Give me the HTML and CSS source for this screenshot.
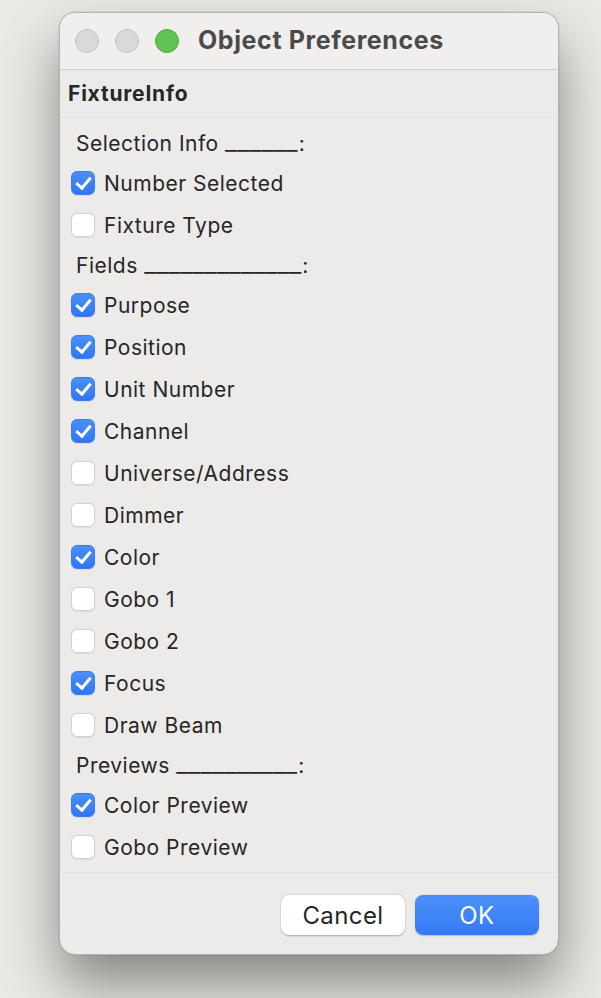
FILE: index.html
```html
<!DOCTYPE html>
<html>
<head>
<meta charset="utf-8">
<link rel="stylesheet" href="styles.css">
</head>
<body>
<div class="window">
  <div class="titlebar">
    <div class="lights">
      <span class="light gray"></span>
      <span class="light gray"></span>
      <span class="light green"></span>
    </div>
    <div class="title">Object Preferences</div>
  </div>
  <div class="header">FixtureInfo</div>
  <div class="panel">
    <div class="label">Selection Info <span class="blank">______</span>:</div>
    <div class="row"><span class="cb on"></span><span>Number Selected</span></div>
    <div class="row"><span class="cb"></span><span>Fixture Type</span></div>
    <div class="label">Fields <span class="blank">_____________</span>:</div>
    <div class="row"><span class="cb on"></span><span>Purpose</span></div>
    <div class="row"><span class="cb on"></span><span>Position</span></div>
    <div class="row"><span class="cb on"></span><span>Unit Number</span></div>
    <div class="row"><span class="cb on"></span><span>Channel</span></div>
    <div class="row"><span class="cb"></span><span>Universe/Address</span></div>
    <div class="row"><span class="cb"></span><span>Dimmer</span></div>
    <div class="row"><span class="cb on"></span><span>Color</span></div>
    <div class="row"><span class="cb"></span><span>Gobo 1</span></div>
    <div class="row"><span class="cb"></span><span>Gobo 2</span></div>
    <div class="row"><span class="cb on"></span><span>Focus</span></div>
    <div class="row"><span class="cb"></span><span>Draw Beam</span></div>
    <div class="label">Previews <span class="blank">__________</span>:</div>
    <div class="row"><span class="cb on"></span><span>Color Preview</span></div>
    <div class="row"><span class="cb"></span><span>Gobo Preview</span></div>
  </div>
  <div class="footer">
    <button class="btn cancel">Cancel</button>
    <button class="btn ok">OK</button>
  </div>
</div>
</body>
</html>
```
FILE: styles.css
```css
html, body {
  margin: 0;
  padding: 0;
}
body {
  width: 601px;
  height: 998px;
  overflow: hidden;
  background: #e9eae5;
  font-family: Inter, "Open Sans", sans-serif;
  padding-top: 12px;
  box-sizing: border-box;
}
.window {
  margin-left: 59px;
  width: 500px;
  height: 943px;
  box-sizing: border-box;
  border: 1px solid #b4b4b2;
  border-radius: 16px;
  background: #ecebea;
  box-shadow: 0 30px 55px rgba(0,0,0,0.42), 0 0 0 0.5px rgba(0,0,0,0.1);
  overflow: hidden;
  display: flex;
  flex-direction: column;
}
.titlebar {
  height: 57px;
  flex: none;
  background: #f0efee;
  border-bottom: 1px solid #cfcfcf;
  box-sizing: border-box;
  display: flex;
  align-items: center;
  padding-left: 15px;
}
.lights {
  display: flex;
  gap: 16px;
}
.light {
  width: 24px;
  height: 24px;
  border-radius: 50%;
  box-sizing: border-box;
}
.light.gray {
  background: #d9d9d8;
  border: 1px solid #c4c4c3;
}
.light.green {
  background: #5fc454;
  border: 1px solid #4daa42;
}
.title {
  margin-left: 19px;
  margin-top: -2px;
  font-size: 25px;
  font-weight: 700;
  color: #4a4a4a;
  letter-spacing: 0.6px;
}
.header {
  height: 48px;
  flex: none;
  background: #ebebeb;
  border-bottom: 1px solid #e2e2e2;
  box-sizing: border-box;
  display: flex;
  align-items: center;
  padding-left: 8px;
  font-size: 21px;
  font-weight: 700;
  color: #262626;
  letter-spacing: 0.8px;
}
.panel {
  margin: 0 1px 0 1px;
  border-left: 1px solid #e2e2e2;
  border-right: 1px solid #e2e2e2;
  border-bottom: 1px solid #e1e1e1;
  padding: 6px 0 4px 9px;
  flex: none;
  color: #262626;
  font-size: 21px;
  letter-spacing: 0.5px;
}
.label {
  height: 38px;
  display: flex;
  align-items: center;
  padding-left: 5px;
  white-space: pre;
}
.blank {
  font-size: 27px;
  font-weight: 300;
  letter-spacing: 0;
  margin-left: 0;
  margin-right: 1px;
  line-height: 1;
  position: relative;
  top: -3px;
}
.row {
  height: 42px;
  display: flex;
  align-items: center;
  gap: 9px;
}
.cb {
  width: 24px;
  height: 24px;
  box-sizing: border-box;
  border-radius: 6px;
  background: #ffffff;
  border: 1px solid #d2d2d2;
  box-shadow: 0 0.5px 1px rgba(0,0,0,0.08);
  position: relative;
  flex: none;
}
.cb.on {
  background: linear-gradient(#4a8ff8, #2f76f5);
  border: 1px solid #3b7ff0;
}
.cb.on::after {
  content: "";
  position: absolute;
  left: 7px;
  top: 2px;
  width: 6px;
  height: 12px;
  border-right: 3px solid #fff;
  border-bottom: 3px solid #fff;
  transform: rotate(40deg);
}
.footer {
  flex: 1;
  display: flex;
  justify-content: flex-end;
  align-items: flex-start;
  padding: 22px 19px 0 0;
  gap: 10px;
}
.btn {
  width: 124px;
  height: 40px;
  border-radius: 8px;
  border: none;
  font-family: Inter, "Open Sans", sans-serif;
  font-size: 24px;
  letter-spacing: 0.4px;
  padding: 0;
}
.btn.cancel {
  background: #ffffff;
  color: #262626;
  box-shadow: 0 0.5px 2px rgba(0,0,0,0.3);
}
.btn.ok {
  background: linear-gradient(#4c91f8, #3479f6);
  color: #ffffff;
  box-shadow: 0 0.5px 1.5px rgba(0,0,0,0.2);
}
```
